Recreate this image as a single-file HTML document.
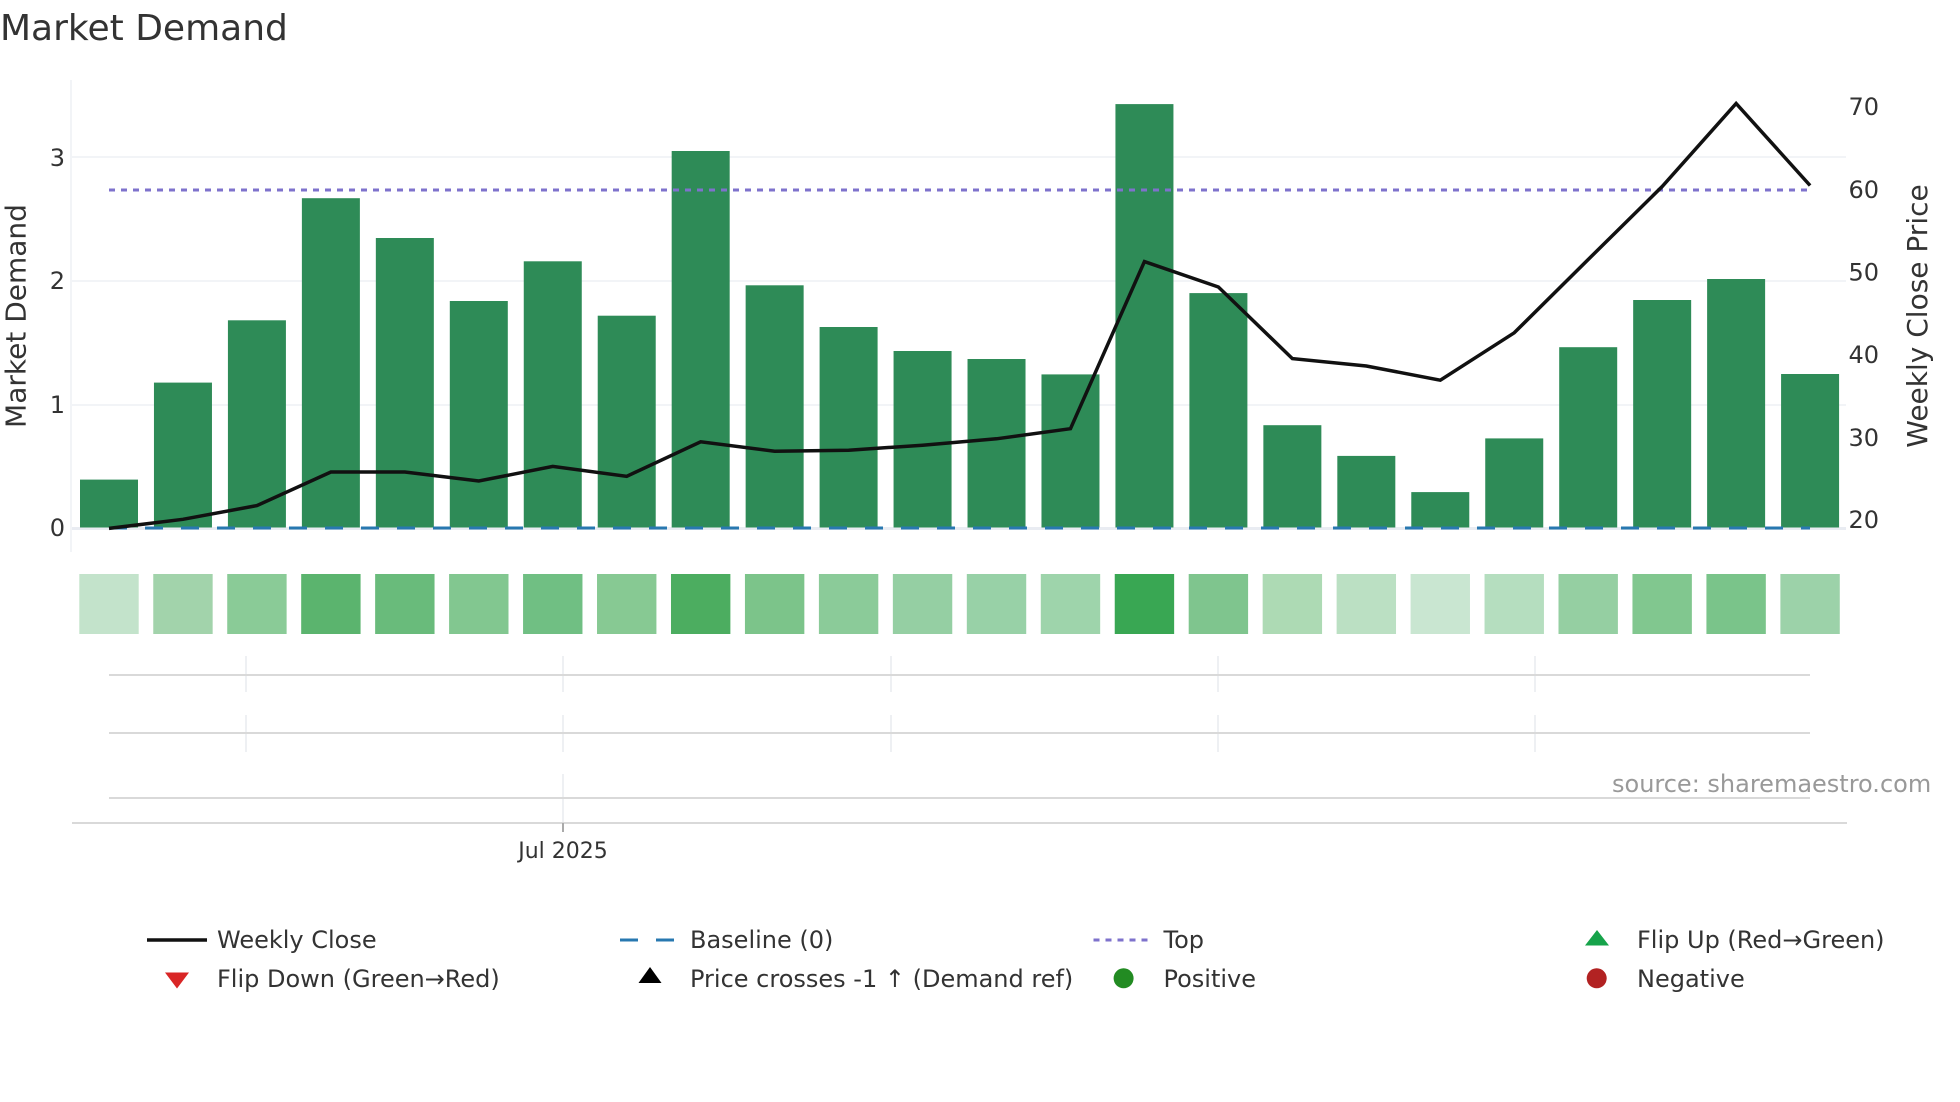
<!DOCTYPE html>
<html>
<head>
<meta charset="utf-8">
<title>Market Demand</title>
<style>
html,body{margin:0;padding:0;background:#fff;width:1960px;height:1102px;overflow:hidden}
svg{display:block}
text{font-family:"DejaVu Sans","Liberation Sans",sans-serif;fill:#333}
.t{font-size:24px}
.l{font-size:24px}
</style>
</head>
<body>
<svg width="1960" height="1102" viewBox="0 0 1960 1102" xmlns="http://www.w3.org/2000/svg">
<rect width="1960" height="1102" fill="#fff"/>

<text x="0" y="40" style="font-size:36px">Market Demand</text>

<!-- grid -->
<g fill="#f2f4f7">
<rect x="70" y="80" width="2" height="472"/>
<rect x="72" y="156" width="1774" height="2"/>
<rect x="72" y="280" width="1774" height="2"/>
<rect x="72" y="404" width="1774" height="2"/>
<rect x="72" y="527" width="1774" height="3" fill="#e9ecf2"/>
</g>

<!-- bars -->
<g fill="#2e8b57">
<rect x="80" y="479.6" width="58" height="47.9"/>
<rect x="153.96" y="382.6" width="58" height="144.9"/>
<rect x="227.92" y="320.3" width="58" height="207.2"/>
<rect x="301.88" y="198.2" width="58" height="329.3"/>
<rect x="375.84" y="238" width="58" height="289.5"/>
<rect x="449.8" y="301" width="58" height="226.5"/>
<rect x="523.76" y="261.3" width="58" height="266.2"/>
<rect x="597.72" y="315.7" width="58" height="211.8"/>
<rect x="671.68" y="151" width="58" height="376.5"/>
<rect x="745.64" y="285.3" width="58" height="242.2"/>
<rect x="819.6" y="327" width="58" height="200.5"/>
<rect x="893.56" y="351" width="58" height="176.5"/>
<rect x="967.52" y="359" width="58" height="168.5"/>
<rect x="1041.48" y="374.4" width="58" height="153.1"/>
<rect x="1115.44" y="104.1" width="58" height="423.4"/>
<rect x="1189.4" y="293.1" width="58" height="234.4"/>
<rect x="1263.36" y="425.2" width="58" height="102.3"/>
<rect x="1337.32" y="455.9" width="58" height="71.6"/>
<rect x="1411.28" y="492.1" width="58" height="35.4"/>
<rect x="1485.24" y="438.4" width="58" height="89.1"/>
<rect x="1559.2" y="347.2" width="58" height="180.3"/>
<rect x="1633.16" y="300" width="58" height="227.5"/>
<rect x="1707.12" y="279" width="58" height="248.5"/>
<rect x="1781.08" y="374" width="58" height="153.5"/>
</g>

<!-- reference lines -->
<line x1="109" y1="528" x2="1810" y2="528" stroke="#2878b0" stroke-width="3" stroke-dasharray="18 18"/>
<line x1="109" y1="190" x2="1810" y2="190" stroke="#7e72cc" stroke-width="3" stroke-dasharray="6 6"/>

<!-- price line -->
<polyline fill="none" stroke="#111" stroke-width="3.5" stroke-linejoin="miter" points="109,528.4 182.96,519.3 256.92,505.6 330.88,472 404.84,472 478.8,481 552.76,466.4 626.72,476.3 700.68,441.8 774.64,451.2 848.6,450.2 922.56,445.2 996.52,438.8 1070.48,428.7 1144.44,261.6 1218.4,287 1292.36,358.6 1366.32,366 1440.28,380.2 1514.24,332.8 1588.2,259.5 1662.16,186.5 1736.12,103.5 1810.08,185.5"/>

<!-- left ticks -->
<g class="t" text-anchor="end">
<text x="65" y="166" class="t">3</text>
<text x="65" y="289" class="t">2</text>
<text x="65" y="413" class="t">1</text>
<text x="65" y="536" class="t">0</text>
</g>

<!-- right ticks -->
<text x="1848.5" y="115" class="t">70</text>
<text x="1848.5" y="197.8" class="t">60</text>
<text x="1848.5" y="280.4" class="t">50</text>
<text x="1848.5" y="362.8" class="t">40</text>
<text x="1848.5" y="445.8" class="t">30</text>
<text x="1848.5" y="528" class="t">20</text>

<!-- axis titles -->
<text transform="translate(25.5 316) rotate(-90)" text-anchor="middle" style="font-size:28px">Market Demand</text>
<text transform="translate(1927 316) rotate(-90)" text-anchor="middle" style="font-size:28px">Weekly Close Price</text>

<!-- heat strip -->
<g>
<rect x="79.3" y="574" width="59.4" height="60" fill="#c3e3cb"/>
<rect x="153.26" y="574" width="59.4" height="60" fill="#a2d3ab"/>
<rect x="227.22" y="574" width="59.4" height="60" fill="#8acb97"/>
<rect x="301.18" y="574" width="59.4" height="60" fill="#5bb46e"/>
<rect x="375.14" y="574" width="59.4" height="60" fill="#69bb7b"/>
<rect x="449.1" y="574" width="59.4" height="60" fill="#82c790"/>
<rect x="523.06" y="574" width="59.4" height="60" fill="#70bf83"/>
<rect x="597.02" y="574" width="59.4" height="60" fill="#87c993"/>
<rect x="670.98" y="574" width="59.4" height="60" fill="#4cad60"/>
<rect x="744.94" y="574" width="59.4" height="60" fill="#7cc48a"/>
<rect x="818.9" y="574" width="59.4" height="60" fill="#8bcb99"/>
<rect x="892.86" y="574" width="59.4" height="60" fill="#95cfa3"/>
<rect x="966.82" y="574" width="59.4" height="60" fill="#98d1a7"/>
<rect x="1040.78" y="574" width="59.4" height="60" fill="#9ed4ab"/>
<rect x="1114.74" y="574" width="59.4" height="60" fill="#39a753"/>
<rect x="1188.7" y="574" width="59.4" height="60" fill="#7fc58e"/>
<rect x="1262.66" y="574" width="59.4" height="60" fill="#addab4"/>
<rect x="1336.62" y="574" width="59.4" height="60" fill="#bbe0c3"/>
<rect x="1410.58" y="574" width="59.4" height="60" fill="#c9e6d1"/>
<rect x="1484.54" y="574" width="59.4" height="60" fill="#b5debf"/>
<rect x="1558.5" y="574" width="59.4" height="60" fill="#95cfa2"/>
<rect x="1632.46" y="574" width="59.4" height="60" fill="#81c78f"/>
<rect x="1706.42" y="574" width="59.4" height="60" fill="#7ac48a"/>
<rect x="1780.38" y="574" width="59.4" height="60" fill="#9cd2a9"/>
</g>

<!-- lower panel vertical grid -->
<g fill="#eef0f3">
<rect x="245" y="656" width="2" height="36"/>
<rect x="562" y="656" width="2" height="36"/>
<rect x="890" y="656" width="2" height="36"/>
<rect x="1217" y="656" width="2" height="36"/>
<rect x="1534" y="656" width="2" height="36"/>
<rect x="245" y="715" width="2" height="37"/>
<rect x="562" y="715" width="2" height="37"/>
<rect x="890" y="715" width="2" height="37"/>
<rect x="1217" y="715" width="2" height="37"/>
<rect x="1534" y="715" width="2" height="37"/>
<rect x="562" y="774" width="2" height="49"/>
</g>

<!-- lower panel horizontal lines -->
<g fill="#d9d9d9">
<rect x="109" y="674" width="1701" height="2"/>
<rect x="109" y="732" width="1701" height="2"/>
<rect x="109" y="797" width="1701" height="2"/>
<rect x="72" y="822" width="1775" height="2"/>
</g>
<rect x="562" y="823" width="2" height="9" fill="#aaa"/>

<text x="563" y="858" text-anchor="middle" style="font-size:22px">Jul 2025</text>
<text x="1612" y="792" class="t" style="fill:#999">source: sharemaestro.com</text>

<!-- legend -->
<line x1="147" y1="940" x2="207" y2="940" stroke="#111" stroke-width="3.5"/>
<text x="217" y="948" class="l">Weekly Close</text>
<polygon points="165,972.5 189,972.5 177,988.5" fill="#d92626"/>
<text x="217" y="987" class="l">Flip Down (Green→Red)</text>

<line x1="620" y1="940" x2="675" y2="940" stroke="#2878b0" stroke-width="3" stroke-dasharray="18 18"/>
<text x="690" y="948" class="l">Baseline (0)</text>
<polygon points="638.5,983 661.5,983 650,967" fill="#000"/>
<text x="690" y="987" class="l">Price crosses -1 ↑ (Demand ref)</text>

<line x1="1093.5" y1="940" x2="1148" y2="940" stroke="#7e72cc" stroke-width="3" stroke-dasharray="6 6"/>
<text x="1163.5" y="948" class="l">Top</text>
<circle cx="1123.6" cy="978.3" r="10" fill="#228b22"/>
<text x="1163.5" y="987" class="l">Positive</text>

<polygon points="1585,945.5 1609,945.5 1597,930" fill="#16a34a"/>
<text x="1637" y="948" class="l">Flip Up (Red→Green)</text>
<circle cx="1596.7" cy="978.3" r="10" fill="#b22222"/>
<text x="1637" y="987" class="l">Negative</text>
</svg>
</body>
</html>
